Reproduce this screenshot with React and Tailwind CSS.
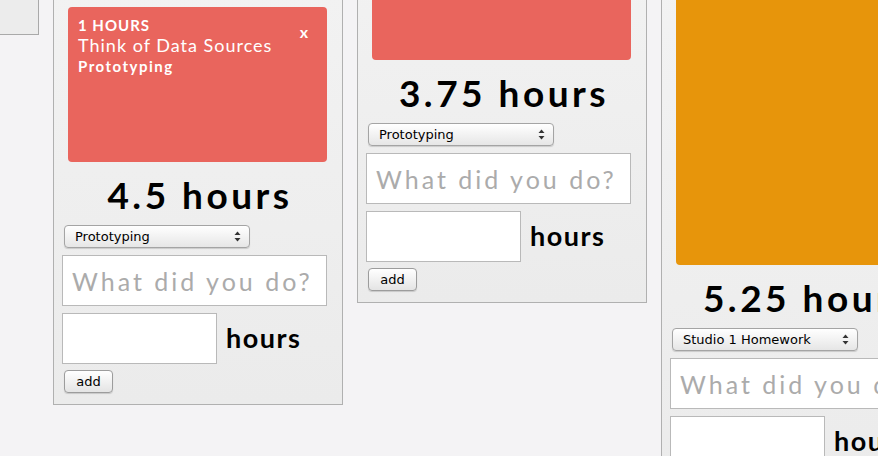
import { useState } from 'react';

const round = '"Lato", "Noto Sans", sans-serif';
const mac = '"DejaVu Sans", "Liberation Sans", sans-serif';

// each column: stacked task cards (the older ones sit above the fold), then total and the add form
const columns = [
  { filler: 215 },
  {
    total: '4.5 hours',
    category: 'Prototyping',
    cards: [
      { height: 161, color: 'bg-[#e9655d]' },
      { height: 155, color: 'bg-[#e9655d]', hours: 1, title: 'Think of Data Sources', category: 'Prototyping' },
    ],
  },
  {
    total: '3.75 hours',
    category: 'Prototyping',
    cards: [{ height: 224, color: 'bg-[#e9655d]' }],
  },
  {
    total: '5.25 hours',
    category: 'Studio 1 Homework',
    cards: [{ height: 429, color: 'bg-[#e7950b]' }],
  },
];

function Card({ card }) {
  return (
    <div
      className={`ml-[6px] w-[259px] rounded-[4px] ${card.color} px-[10px] pt-[9px] text-white`}
      style={{ height: card.height, fontFamily: round }}
    >
      {card.title && (
        <div className="flex items-start justify-between">
          <div>
            <div className="text-[15px] font-bold uppercase leading-[18px] tracking-[1px]">{card.hours} hours</div>
            <div className="text-[18px] leading-[22px] tracking-[1px]">{card.title}</div>
            <div className="text-[15px] font-bold leading-[20px] tracking-[1.5px]">{card.category}</div>
          </div>
          <span className="mr-[9px] mt-[8px] text-[16px] font-bold leading-[15px]">x</span>
        </div>
      )}
    </div>
  );
}

function Select({ value }) {
  return (
    <div
      className="ml-[2px] flex h-[23px] w-[186px] items-center justify-between rounded-[4px] border border-[#a4a4a4] bg-linear-to-b from-white to-[#e6e6e6] pl-[10px] pr-[8px] text-[13px] text-black shadow-[0_1px_1px_rgba(0,0,0,0.15)]"
      style={{ fontFamily: mac }}
    >
      <span>{value}</span>
      <svg width="7" height="11" viewBox="0 0 7 11">
        <path d="M0.5 4 L3.5 0.5 L6.5 4 Z" fill="#333" />
        <path d="M0.5 7 L3.5 10.5 L6.5 7 Z" fill="#333" />
      </svg>
    </div>
  );
}

function Column({ col }) {
  const [what, setWhat] = useState('');
  const [hours, setHours] = useState('');

  if (col.filler) {
    return (
      <div
        className="w-[290px] shrink-0 border border-[#a9a9a9] bg-[#ececec]"
        style={{ height: col.filler }}
      />
    );
  }

  return (
    <div className="flex w-[290px] shrink-0 flex-col border border-[#b0b0b0] bg-linear-to-b from-[#f5f5f5] to-[#ebebeb] pb-[11px] pl-[8px] pt-[15px]">
      <div className="flex flex-col gap-[10px]">
        {col.cards.map((c, i) => (
          <Card key={i} card={c} />
        ))}
      </div>
      <h2
        className="mt-[11px] h-[44px] pl-[4px] pr-[8px] text-center text-[37px] font-bold leading-[44px] tracking-[3.5px] text-black"
        style={{ fontFamily: round }}
      >
        {col.total}
      </h2>
      <div className="mt-[8px]">
        <Select value={col.category} />
      </div>
      <input
        value={what}
        onChange={(e) => setWhat(e.target.value)}
        placeholder="What did you do?"
        className="mt-[7px] h-[51px] w-[265px] border border-[#b9b9b9] bg-white px-[9px] text-[25px] tracking-[3px] text-black outline-none placeholder:text-[#ababab]"
        style={{ fontFamily: round }}
      />
      <div className="mt-[7px] flex items-center gap-[9px]">
        <input
          value={hours}
          onChange={(e) => setHours(e.target.value)}
          className="h-[51px] w-[155px] border border-[#b9b9b9] bg-white px-[8px] text-[25px] outline-none"
        />
        <span className="text-[27px] font-bold tracking-[1.5px] text-black" style={{ fontFamily: round }}>
          hours
        </span>
      </div>
      <button
        className="ml-[2px] mt-[6px] h-[23px] w-[49px] rounded-[4px] border border-[#9c9c9c] bg-linear-to-b from-white to-[#e4e4e4] text-[13px] text-black shadow-[0_1px_1px_rgba(0,0,0,0.15)]"
        style={{ fontFamily: mac }}
      >
        add
      </button>
    </div>
  );
}

export default function App() {
  return (
    <div className="h-[456px] w-[878px] overflow-hidden bg-[#f4f3f5]">
      <div className="ml-[-251px] mt-[-180px] flex items-start gap-[14px]">
        {columns.map((col, i) => (
          <Column key={i} col={col} />
        ))}
      </div>
    </div>
  );
}
